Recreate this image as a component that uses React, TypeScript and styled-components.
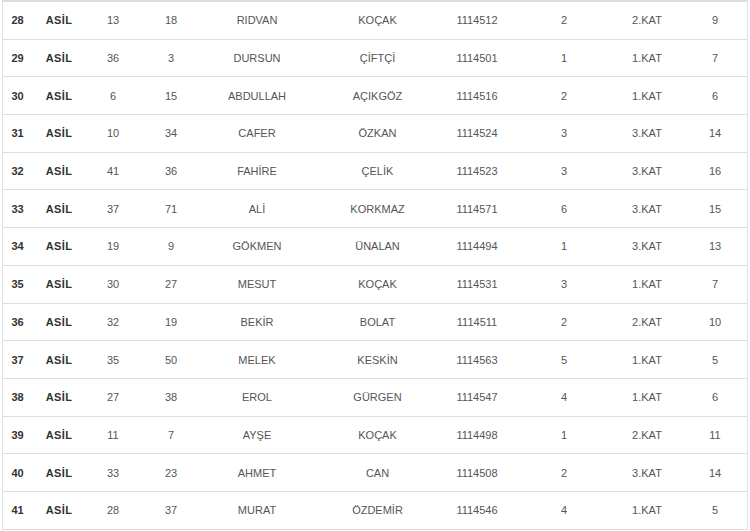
import React from "react";
import styled, { createGlobalStyle } from "styled-components";

interface Row {
  no: number;
  status: string;
  a: number;
  b: number;
  name: string;
  surname: string;
  code: string;
  count: number;
  floor: string;
  room: number;
}

const rows: Row[] = [
  { no: 28, status: "ASİL", a: 13, b: 18, name: "RIDVAN", surname: "KOÇAK", code: "1114512", count: 2, floor: "2.KAT", room: 9 },
  { no: 29, status: "ASİL", a: 36, b: 3, name: "DURSUN", surname: "ÇİFTÇİ", code: "1114501", count: 1, floor: "1.KAT", room: 7 },
  { no: 30, status: "ASİL", a: 6, b: 15, name: "ABDULLAH", surname: "AÇIKGÖZ", code: "1114516", count: 2, floor: "1.KAT", room: 6 },
  { no: 31, status: "ASİL", a: 10, b: 34, name: "CAFER", surname: "ÖZKAN", code: "1114524", count: 3, floor: "3.KAT", room: 14 },
  { no: 32, status: "ASİL", a: 41, b: 36, name: "FAHİRE", surname: "ÇELİK", code: "1114523", count: 3, floor: "3.KAT", room: 16 },
  { no: 33, status: "ASİL", a: 37, b: 71, name: "ALİ", surname: "KORKMAZ", code: "1114571", count: 6, floor: "3.KAT", room: 15 },
  { no: 34, status: "ASİL", a: 19, b: 9, name: "GÖKMEN", surname: "ÜNALAN", code: "1114494", count: 1, floor: "3.KAT", room: 13 },
  { no: 35, status: "ASİL", a: 30, b: 27, name: "MESUT", surname: "KOÇAK", code: "1114531", count: 3, floor: "1.KAT", room: 7 },
  { no: 36, status: "ASİL", a: 32, b: 19, name: "BEKİR", surname: "BOLAT", code: "1114511", count: 2, floor: "2.KAT", room: 10 },
  { no: 37, status: "ASİL", a: 35, b: 50, name: "MELEK", surname: "KESKİN", code: "1114563", count: 5, floor: "1.KAT", room: 5 },
  { no: 38, status: "ASİL", a: 27, b: 38, name: "EROL", surname: "GÜRGEN", code: "1114547", count: 4, floor: "1.KAT", room: 6 },
  { no: 39, status: "ASİL", a: 11, b: 7, name: "AYŞE", surname: "KOÇAK", code: "1114498", count: 1, floor: "2.KAT", room: 11 },
  { no: 40, status: "ASİL", a: 33, b: 23, name: "AHMET", surname: "CAN", code: "1114508", count: 2, floor: "3.KAT", room: 14 },
  { no: 41, status: "ASİL", a: 28, b: 37, name: "MURAT", surname: "ÖZDEMİR", code: "1114546", count: 4, floor: "1.KAT", room: 5 },
];

const GlobalStyle = createGlobalStyle`
  html, body {
    margin: 0;
    padding: 0;
    background: #fff;
    overflow: hidden;
  }
  body {
    font-family: "Liberation Sans", Arial, sans-serif;
  }
`;

export default function App() {
  return (
    <>
      <GlobalStyle />
      <Page>
        <Table>
          {rows.map((r) => (
            <TableRow key={r.no}>
              <Cell bold>{r.no}</Cell>
              <Cell bold spaced>{r.status}</Cell>
              <Cell>{r.a}</Cell>
              <Cell>{r.b}</Cell>
              <Cell>{r.name}</Cell>
              <Cell>{r.surname}</Cell>
              <Cell>{r.code}</Cell>
              <Cell>{r.count}</Cell>
              <Cell>{r.floor}</Cell>
              <LastCell>{r.room}</LastCell>
            </TableRow>
          ))}
        </Table>
      </Page>
    </>
  );
}

const Page = styled.div`
  width: 750px;
  height: 531px;
  overflow: hidden;
  padding: 0 2px;
  box-sizing: border-box;
`;

const Table = styled.div`
  border-top: 2px solid #dcdcdc;
  border-left: 1px solid #e2e2e2;
  border-right: 1px solid #e2e2e2;
`;

const TableRow = styled.div`
  display: grid;
  grid-template-columns: 29px 54px 54px 62px 110px 131px 68px 106px 60px 1fr;
  align-items: center;
  height: 37.7px;
  box-sizing: border-box;
  border-bottom: 1px solid #dddddd;
  font-size: 11px;
  color: #555;
`;

const Cell = styled.div<{ bold?: boolean; spaced?: boolean }>`
  text-align: center;
  white-space: nowrap;
  font-weight: ${(p) => (p.bold ? 700 : 400)};
  color: ${(p) => (p.bold ? "#333" : "inherit")};
  letter-spacing: ${(p) => (p.spaced ? "0.4px" : "0")};
`;

const LastCell = styled(Cell)`
  padding-left: 6px;
`;
